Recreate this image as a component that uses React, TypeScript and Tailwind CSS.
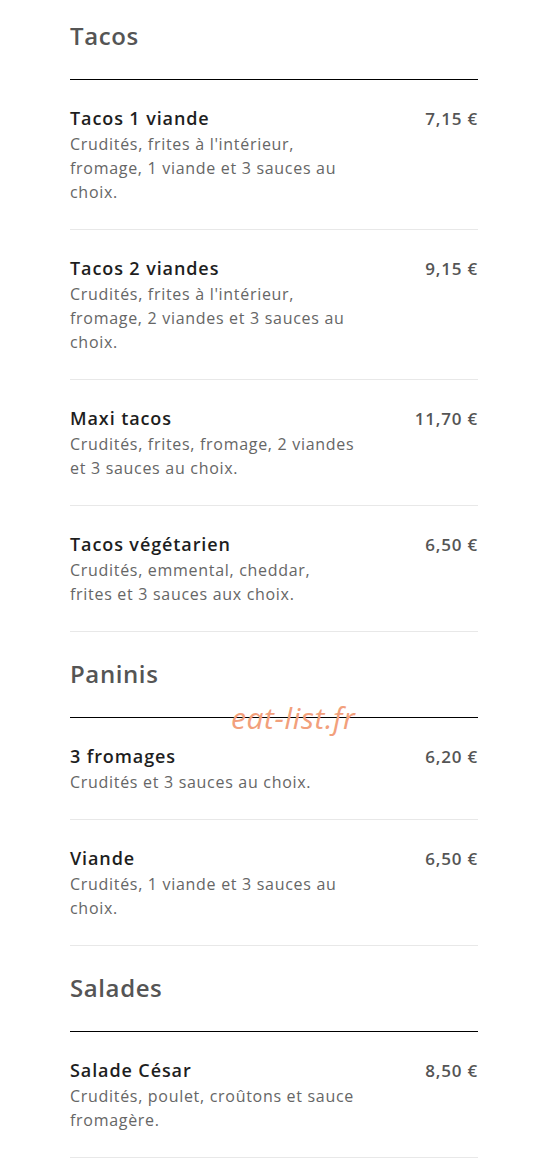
import React from "react";

type Item = { name: string; desc: string; price: string };
type Section = { title: string; items: Item[] };

const sections: Section[] = [
  {
    title: "Tacos",
    items: [
      { name: "Tacos 1 viande", desc: "Crudités, frites à l'intérieur, fromage, 1 viande et 3 sauces au choix.", price: "7,15 €" },
      { name: "Tacos 2 viandes", desc: "Crudités, frites à l'intérieur, fromage, 2 viandes et 3 sauces au choix.", price: "9,15 €" },
      { name: "Maxi tacos", desc: "Crudités, frites, fromage, 2 viandes et 3 sauces au choix.", price: "11,70 €" },
      { name: "Tacos végétarien", desc: "Crudités, emmental, cheddar, frites et 3 sauces aux choix.", price: "6,50 €" },
    ],
  },
  {
    title: "Paninis",
    items: [
      { name: "3 fromages", desc: "Crudités et 3 sauces au choix.", price: "6,20 €" },
      { name: "Viande", desc: "Crudités, 1 viande et 3 sauces au choix.", price: "6,50 €" },
    ],
  },
  {
    title: "Salades",
    items: [
      { name: "Salade César", desc: "Crudités, poulet, croûtons et sauce fromagère.", price: "8,50 €" },
    ],
  },
];

export default function App() {
  return (
    <div
      className="relative min-h-[1163px] bg-white px-[70px]"
      style={{ fontFamily: '"Open Sans", "Liberation Sans", sans-serif' }}
    >
      <div className="w-[408px]">
        {sections.map((s, si) => (
          <section key={s.title}>
            <h2
              className={`${si === 0 ? "pt-[20px]" : "pt-[26px]"} pb-[27px] border-b border-black text-[24px] leading-[32px] font-semibold tracking-[0.6px] text-[#555555]`}
            >
              {s.title}
            </h2>
            {s.items.map((it) => (
              <div key={it.name} className="flex border-b border-[#e8e8e8] py-[25px]">
                <div className="w-[70%]">
                  <div className="text-[18px] leading-[27px] font-semibold tracking-[0.9px] text-[#1e1e1e]">{it.name}</div>
                  <div className="text-[16px] leading-[24px] tracking-[0.7px] text-[#666666]">{it.desc}</div>
                </div>
                <div className="w-[30%] text-right text-[17px] leading-[27px] font-semibold tracking-[0.8px] text-[#555555]">
                  {it.price}
                </div>
              </div>
            ))}
          </section>
        ))}
      </div>
      <div className="absolute left-[231px] top-[698px] text-[30px] leading-[40px] italic tracking-[0.6px] text-[#f2a07c] pointer-events-none">
        eat-list.fr
      </div>
    </div>
  );
}
